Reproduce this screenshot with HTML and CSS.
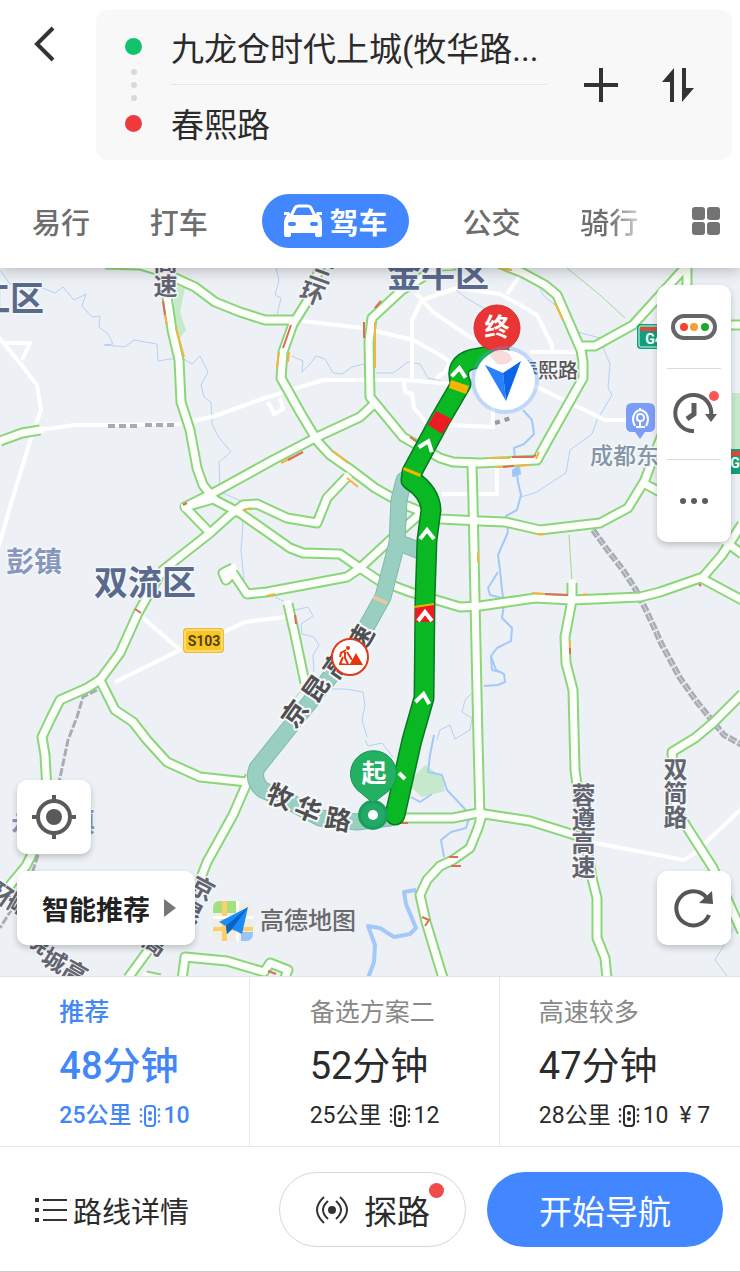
FILE: index.html
```html
<!DOCTYPE html>
<html lang="zh-CN">
    <head>
        <meta charset="UTF-8">
        <meta name="viewport" content="width=device-width, initial-scale=1.0">
        <title>路线规划</title>
        <link rel="stylesheet" href="styles.css">
    </head>
    <body>
        <header class="top">
            <div class="search-row">
                <button class="icon-btn back" aria-label="返回">
                    <svg width="24" height="40" viewBox="0 0 24 40"><path d="M20 4L4 20L20 36" fill="none" stroke="#333" stroke-width="4"/></svg>
                </button>
                <div class="search-card">
                    <div class="track">
                        <i class="stop green"></i>
                        <i class="dot"></i><i class="dot"></i><i class="dot"></i>
                        <i class="stop red"></i>
                    </div>
                    <div class="fields">
                        <input type="text" aria-label="起点" value="九龙仓时代上城(牧华路...">
                        <input type="text" aria-label="终点" value="春熙路">
                    </div>
                    <button class="icon-btn" aria-label="添加途经点">
                        <svg width="34" height="34" viewBox="0 0 34 34"><path d="M17 0V34M0 17H34" stroke="#333" stroke-width="4"/></svg>
                    </button>
                    <button class="icon-btn" aria-label="交换起终点">
                        <svg width="34" height="34" viewBox="0 0 34 34" fill="#333"><path d="M13 0V34H9V14H1z"/><path d="M21 0H25V20H33L21 34z"/></svg>
                    </button>
                </div>
            </div>
            <nav class="modes">
                <button>易行</button>
                <button>打车</button>
                <button class="active">
                    <svg width="40" height="34" viewBox="0 0 40 34">
                        <path d="M8 12L12 4Q13 2 16 2H24Q27 2 28 4L32 12" fill="none" stroke="#fff" stroke-width="3"/>
                        <path fill="#fff" d="M1 8H6Q7 11 10 11H30Q33 11 34 8H39V11H36Q39 14 39 18V31Q39 33 37 33H34Q32 33 32 31V29H8V31Q8 33 6 33H3Q1 33 1 31V18Q1 14 4 11H1z"/>
                        <rect x="5" y="18" width="8" height="4" rx="2" fill="#4287ff"/>
                        <rect x="27" y="18" width="8" height="4" rx="2" fill="#4287ff"/>
                    </svg>
                    驾车
                </button>
                <button>公交</button>
                <button class="faded">骑行</button>
                <button aria-label="更多出行方式">
                    <svg width="28" height="28" viewBox="0 0 28 28" fill="#737373"><rect width="13" height="13" rx="3"/><rect x="15" width="13" height="13" rx="3"/><rect y="15" width="13" height="13" rx="3"/><rect x="15" y="15" width="13" height="13" rx="3"/></svg>
                </button>
            </nav>
        </header>

        <main class="map">
            <svg class="map-canvas" viewBox="0 268 740 708" preserveAspectRatio="xMidYMid slice">
                <defs>
                    <g id="roads">
                        <path d="M40 430L22 433L0 441"/>
                        <path d="M105 264L140 265L160 271L195 287L215 302L240 312L265 320H293"/>
                        <path d="M322 262L308 300L293 324L283 352L281 378L300 412L318 442L330 455L350 469L375 488L405 505L440 519L480 521L505 522L540 530L600 523L628 508L645 480L656 450L668 420"/>
                        <path d="M496 262L440 266L402 290L372 318L369 342L370 397L403 437L440 458L453 462L480 463L537 460L548 440L583 378V362L581 350L557 295L545 285L523 273L496 262"/>
                        <path d="M372 406L360 417L317 437L273 460L215 492L185 507L210 533"/>
                        <path d="M166 290L172 330L179 360L181 402L190 430L197 468L203 485L215 500L240 513L290 548L303 553L340 554L360 568L378 580L410 592L460 607L480 606L535 598L572 600L640 597L660 592L703 577L722 555L742 524"/>
                        <path d="M347 477L327 498L317 523L287 518L257 504L243 505L230 515L210 533L163 570L147 597L138 613L120 653L100 680L87 688L60 700L50 720L42 737L45 755L47 790L38 842L26 866L6 890"/>
                        <path d="M185 507L213 499"/>
                        <path d="M233 568L223 573L226 580L233 573L247 594L267 592L347 577L360 568L387 543L420 514"/>
                        <path d="M288 604L295 635L305 683"/>
                        <path d="M472 466L473 500L475 600L478 740L480 818"/>
                        <path d="M395 818H453L478 813L530 821L578 836"/>
                        <path d="M482 815L478 828L470 848L453 860L440 866L427 880L420 895L426 922L443 978"/>
                        <path d="M100 680L115 710L133 722L147 740L167 762L200 777L247 782"/>
                        <path d="M250 776L233 815L207 862L200 880L170 925L147 952L128 978"/>
                        <path d="M182 980L185 957L227 961L264 972L270 963L288 970L284 980M146 976L160 979"/>
                        <path d="M572 583V600L565 637L566 663L573 690L575 770L579 800L592 878L597 898V938L605 958L607 978"/>
                        <path d="M742 694L713 723L695 738L672 752L676 810L713 868L742 932"/>
                        <path d="M703 579L742 600M726 542L742 554M647 485L660 492"/>
                        <path d="M583 346L595 346L633 325L690 262M687 262V290M730 325H742"/>
                    </g>
                    <g id="chev"><path d="M-7 5L0 -4L7 5" fill="none" stroke="#fff" stroke-width="4"/></g>
                </defs>

                <rect x="-600" y="0" width="2000" height="1400" fill="#edf1f5"/>

                <!-- parks -->
                <g fill="#c5e9ca">
                    <path d="M174 285L185 288L180 312L186 330L180 338L174 315z"/>
                    <path d="M413 778L425 765L442 777L445 791L422 797L412 788z"/>
                    <path d="M732 393H742V450H732z"/>
                </g>

                <!-- water -->
                <g class="river">
                    <path d="M0 270L10 284L20 282L30 290L40 287L55 293L63 287L74 300L86 294L82 306L92 317L100 316L99 327L108 334L113 344L104 345L125 347L134 340L157 344L158 361L170 359L182 358L192 364L200 356L208 372L201 385L204 397L211 402L212 424L218 436L231 452L219 462L220 492L232 497L245 503"/>
                    <path d="M276 268L279 280L275 295L281 298L277 315"/>
                    <path d="M292 356L303 361L302 372L310 364L316 356L325 359L333 373L342 374L352 367L364 364M376 373H393L408 362L420 364L428 378L441 381L452 388"/>
                    <path d="M456 290L466 298L480 306L503 318"/>
                    <path d="M536 279L543 295L556 306L570 330L600 338L604 350L610 364L608 388L612 395L597 420L592 434L570 450L566 473L555 480L537 492L521 497"/>
                    <path d="M240 510L243 525L241 550L244 580M275 597L287 603L295 610L308 607L313 616L301 624L302 634L314 637L319 645L313 655L314 672M330 689H345L363 692L365 705L362 720L367 737M365 740L368 746L382 743L393 757"/>
                    <path d="M480 685L465 700L462 712L472 718L470 730L455 739L450 725L440 730L437 740"/>
                    <path d="M742 910L730 935L715 960L727 976"/>
                </g>
                <g class="river wide">
                    <path d="M523 410L532 420L534 434L524 444L514 448L515 460L518 482L521 495L517 510L506 516L508 532L498 555L500 570L502 590L504 604L502 618L512 628L511 641L497 648L491 656L496 670L504 674L505 682L498 685L484 686M498 572L488 588L490 595L502 598M491 656L492 670L500 672"/>
                    <path d="M434 735L430 755L428 772L442 775L447 790L463 807L470 815L466 828L451 832L441 840L444 857M411 797L420 802L432 794"/>
                    <path class="lake" d="M416 890L404 892L406 904L416 928L410 934L394 937L380 928L368 926L375 945L374 962L368 978"/>
                    <path d="M513 470L519 466L520 474L513 476z" fill="#9cc3f5"/>
                </g>

                <!-- minor roads -->
                <g class="minor">
                    <path d="M-4 334L20 363L37 385L41 410L32 435L12 500L-4 556M5 343H30L22 360"/>
                    <path d="M40 430L75 425L108 425L180 424L215 416L262 399L323 380L403 380L430 382L452 384M268 402L274 414L283 409L280 398"/>
                    <path d="M302 321L363 328L413 340L440 355L450 362L445 372L436 378"/>
                    <path d="M412 378V320L422 300L457 288L500 294L520 305L537 315L552 345V353M520 275L507 294M416 293L433 312L470 337L486 344M404 382L405 392L412 394L414 408L428 424L493 427V405M442 494H497V468M470 468V520"/>
                    <path d="M530 352H578M535 386L605 420H630"/>
                    <path d="M142 617L180 650L115 682M224 632L245 622L285 617"/>
                    <path d="M590 842L684 860L696 852L742 808"/>
                </g>

                <!-- railways -->
                <g class="rail">
                    <path d="M593 530L606 548L623 570L636 590L647 612L662 645L680 678L697 702L710 718L724 735L742 745"/>
                    <path class="thin" d="M97 690L83 697L77 717L68 740L60 778L37 858L30 880L0 928"/>
                </g>
                <path class="rail-gap" d="M593 530L606 548L623 570L636 590L647 612L662 645L680 678L697 702L710 718L724 735L742 745"/>
                <path d="M108 426H140M145 425H176" stroke="#a9abb0" stroke-width="4" stroke-dasharray="7 4"/>
                <path d="M495 423L511 418" stroke="#999" stroke-width="4" stroke-dasharray="5 5"/>
                <path d="M567 268L600 295L625 318" class="hairline"/>
                <path d="M569 535L572 583M305 686L290 704" class="hairline"/>

                <use href="#roads" class="casing"/>
                <use href="#roads" class="surface"/>

                <!-- slow traffic -->
                <g class="slow">
                    <path d="M165 315L167 325M176 328L184 357M279 352L277 368M289 352L288 362M375 322V368M333 451L348 463M347 478L358 487M281 463L291 458M244 510L251 508M266 596L275 594M478 552V562M488 458H510M495 467H502M515 466L530 465M536 459L539 452M555 303L563 320M532 593L545 594M582 595L587 594M570 641V648M500 268L512 270M536 534L544 534"/>
                </g>
                <g class="jam">
                    <path d="M163 301L165 315M375 308L381 301M364 322V338M291 325L283 348M288 460L303 452M410 437L417 442M183 505L187 503M512 457H533L536 455M503 467L514 466M545 594L568 595M570 648V654M295 615L296 624M400 823H408M449 857H458M451 866H461M422 917L429 920L425 926M699 584L701 586M135 609L141 613M268 971L276 974"/>
                </g>

                <!-- alternative route -->
                <path d="M404 480L399 500L397 543L405 545L420 551L405 545L397 543L383 597L363 633L330 677L281 738L257 768Q252 781 263 790L290 802L320 818L357 822L390 818" class="alt-edge"/>
                <path d="M404 480L399 500L397 543L405 545L420 551L405 545L397 543L383 597L363 633L330 677L281 738L257 768Q252 781 263 790L290 802L320 818L357 822L390 818" class="alt"/>
                <path d="M373 597L387 603" stroke="#e8c8a0" stroke-width="4"/>

                <!-- chosen route -->
                <path d="M395 815L412 740L424 698L425 600L427 540L431 510Q430 492 411 480L412 472L440 420L461 384Q453 364 473 359L500 354" class="route-edge"/>
                <path d="M395 815L412 740L424 698L425 600L427 540L431 510Q430 492 411 480L412 472L440 420L461 384Q453 364 473 359L500 354" class="route"/>
                <path d="M436 411L452 419L442 434L428 425z" fill="#ed1c24"/>
                <path d="M451 380L469 386L466 394L449 388z" fill="#f7b500"/>
                <path d="M404 467L421 474L420 477L403 470z" fill="#f7b500"/>
                <path d="M415 606L434 605V622H415z" fill="#ed1c24"/>
                <path d="M414 607L434 604" stroke="#e8b400" stroke-width="2"/>
                <use href="#chev" transform="translate(459 372) rotate(5)"/>
                <use href="#chev" transform="translate(427 445) rotate(20)"/>
                <use href="#chev" transform="translate(427 534)"/>
                <use href="#chev" transform="translate(425 616)"/>
                <use href="#chev" transform="translate(423 698) rotate(8)"/>
                <path d="M399 773L405 779" stroke="#fff" stroke-width="4"/>

                <!-- district and road names -->
                <g class="label district">
                    <text x="-24" y="311">江区</text>
                    <text x="387" y="287">金牛区</text>
                    <text x="94" y="595">双流区</text>
                </g>
                <g class="label town">
                    <text x="6" y="572">彭镇</text>
                    <text x="11" y="832">永安镇</text>
                </g>
                <text class="label station" x="590" y="464">成都东</text>
                <text class="label poi" x="518" y="378">春熙路</text>
                <g class="label road upright">
                    <text x="163" y="250">高速</text>
                    <text x="581" y="783">蓉遵高速</text>
                    <text x="673" y="757">双简路</text>
                </g>
                <g class="label road">
                    <text transform="translate(322 273) rotate(20)" y="8">三</text>
                    <text transform="translate(312 294) rotate(20)" y="8">环</text>
                    <text transform="translate(202 889) rotate(28)" y="8">京</text>
                    <text transform="translate(190 912) rotate(28)" y="8">昆</text>
                    <text transform="translate(155 944) rotate(35)" y="8">高</text>
                    <text transform="translate(3 896) rotate(35)" y="8">环</text>
                    <text transform="translate(20 905) rotate(-60)" y="8">高</text>
                    <text transform="translate(38 942) rotate(35)" y="8">绕</text>
                    <text transform="translate(54 961) rotate(30)" y="8">城</text>
                    <text transform="translate(75 973) rotate(30)" y="8">高</text>
                </g>
                <g class="label road dark">
                    <text transform="translate(295 714) rotate(-55)" y="9">京</text>
                    <text transform="translate(316 689) rotate(-55)" y="9">昆</text>
                    <text transform="translate(337 665) rotate(-55)" y="9">高</text>
                    <text transform="translate(361 639) rotate(-60)" y="9">速</text>
                    <text transform="translate(280 797) rotate(22)" y="9">牧</text>
                    <text transform="translate(308 810) rotate(22)" y="9">华</text>
                    <text transform="translate(338 820) rotate(10)" y="9">路</text>
                </g>

                <!-- road shields -->
                <rect x="183" y="628" width="41" height="25" rx="4" fill="#eebb2c"/>
                <rect x="185" y="630" width="37" height="21" rx="2" fill="#f9c623" stroke="#fff3c0"/>
                <text class="shield" x="204" y="646">S103</text>
                <rect x="637" y="324" width="40" height="25" rx="4" fill="#12a07c"/>
                <rect x="639" y="326" width="36" height="21" rx="2" fill="#12a07c" stroke="#d8f5ec"/>
                <path d="M640 327H675V331H640z" fill="#dc4a3e"/>
                <text class="shield light" x="658" y="344">G42</text>
                <rect x="726" y="449" width="40" height="25" rx="4" fill="#12a07c"/>
                <path d="M728 451H764V456H728z" fill="#dc4a3e"/>
                <text class="shield light" x="743" y="468">G76</text>

                <!-- railway station pin -->
                <path d="M632 403H649Q655 403 655 409V426Q655 432 649 432H645L640 439L635 432H632Q626 432 626 426V409Q626 403 632 403z" fill="#7c9df6"/>
                <path d="M635 426Q631 419 635 413Q640 407 646 413Q650 419 646 426M637 418Q637 414 640 414Q644 414 644 418Q644 421 640 421Q637 421 637 418M640 421V426M636 427H645M640 408V411" fill="none" stroke="#fff" stroke-width="2"/>

                <!-- road works -->
                <circle cx="350" cy="657" r="18" fill="#fff" stroke="#e03a1e" stroke-width="2"/>
                <path d="M350 664L356 653L363 665H339V663z" fill="#e8340c"/>
                <circle cx="348" cy="648" r="2" fill="#e8340c"/>
                <path d="M346 650L341 653L340 657M345 652V658L348 664M343 657L340 664M347 652L352 660" fill="none" stroke="#e8340c" stroke-width="2"/>

                <!-- end, start and heading markers -->
                <circle cx="497" cy="328" r="23" fill="#ea3535" stroke="#d42f2f"/>
                <text class="pin" x="497" y="336">终</text>
                <circle cx="505" cy="380" r="34" fill="#5aa0ff" opacity=".3"/>
                <circle cx="505" cy="380" r="30" fill="#fff"/>
                <path d="M490 356Q491 351 500 350Q511 352 512 360Q507 366 497 364z" fill="#f7dcdc"/>
                <path d="M485 365L503 373L506 401z" fill="#2a80ff"/>
                <path d="M521 361L503 373L506 401z" fill="#0d63ea"/>
                <circle cx="373" cy="815" r="15" fill="#18a05a"/>
                <path d="M373 803L361 793A23 23 0 1 1 386 793z" fill="#23b063" stroke="#169457"/>
                <circle cx="373" cy="815" r="12" fill="#23a867"/>
                <circle cx="373" cy="815" r="5" fill="#fff"/>
                <text class="pin" x="374" y="782">起</text>
            </svg>

            <div class="card tools">
                <button aria-label="路况">
                    <svg width="46" height="26" viewBox="0 0 46 26"><rect x="2" y="2" width="42" height="22" rx="11" fill="#fff" stroke="#666" stroke-width="4"/><circle cx="13" cy="13" r="4" fill="#f0432f"/><circle cx="23" cy="13" r="4" fill="#f79e2d"/><circle cx="34" cy="13" r="4" fill="#1aa72c"/></svg>
                </button>
                <button aria-label="出发时间">
                    <svg width="50" height="46" viewBox="0 0 50 46"><path d="M25 40A18 18 0 1 1 42 25" fill="none" stroke="#5c5c5c" stroke-width="4"/><path d="M36 23H48L42 31z" fill="#5c5c5c"/><path d="M25 12V23L18 28" fill="none" stroke="#5c5c5c" stroke-width="5"/><circle cx="45" cy="5" r="5" fill="#ff5555"/></svg>
                </button>
                <button aria-label="更多">
                    <svg width="30" height="8" viewBox="0 0 30 8" fill="#5c5c5c"><circle cx="4" cy="4" r="3"/><circle cx="15" cy="4" r="3"/><circle cx="26" cy="4" r="3"/></svg>
                </button>
            </div>

            <div class="corner-left">
                <button class="card square" aria-label="定位">
                    <svg width="44" height="44" viewBox="0 0 44 44"><circle cx="22" cy="22" r="16" fill="none" stroke="#5a5a5a" stroke-width="4"/><circle cx="22" cy="22" r="8" fill="#5a5a5a"/><path d="M22 0V8M22 36V44M0 22H8M36 22H44" stroke="#5a5a5a" stroke-width="4"/></svg>
                </button>
                <div class="brand-row">
                    <button class="card prefer">
                        智能推荐
                        <svg width="12" height="18" viewBox="0 0 12 18"><path d="M0 0L12 9L0 18z" fill="#777"/></svg>
                    </button>
                    <div class="brand">
                        <svg width="40" height="40" viewBox="0 0 40 40">
                            <rect width="40" height="40" rx="7" fill="#efeee6"/>
                            <path d="M7 0H24V12H0V7Q0 0 7 0z" fill="#a4e07e"/>
                            <path d="M9 0H14V40H9zM0 26H40V30H0z" fill="#fbcf6a"/>
                            <path d="M23 0H26V40H23zM0 15H40V18H0z" fill="#fff"/>
                            <path d="M28 31H40V34Q39 40 33 40H28z" fill="#9cc4fa"/>
                            <path d="M35 6L6 21L13 25L14 33L19 28L29 33z" fill="#1c8bf7"/>
                            <path d="M35 6L13 25L14 33L19 28z" fill="#0a63c4"/>
                        </svg>
                        <span>高德地图</span>
                    </div>
                </div>
            </div>

            <button class="card square refresh" aria-label="刷新">
                <svg width="40" height="40" viewBox="0 0 40 40"><path d="M35 27A17 17 0 1 1 32 9" fill="none" stroke="#555" stroke-width="4"/><path d="M38 3L39 16L25 15z" fill="#555"/></svg>
            </button>
        </main>

        <svg width="0" height="0" class="sprite">
            <symbol id="light" viewBox="0 0 24 24"><rect x="7" y="2" width="10" height="20" rx="3" fill="none" stroke="currentColor" stroke-width="2"/><circle cx="12" cy="9" r="2" fill="currentColor"/><circle cx="12" cy="15" r="2" fill="currentColor"/><path d="M2 5L4 6M2 11L4 12M2 17L4 18M22 5L20 6M22 11L20 12M22 17L20 18" stroke="currentColor" stroke-width="2"/></symbol>
        </svg>

        <section class="plans">
            <button class="plan selected">
                <span class="plan-body">
                    <span class="name">推荐</span>
                    <span class="time">48分钟</span>
                    <span class="info">25公里<svg width="24" height="24"><use href="#light"/></svg>10</span>
                </span>
            </button>
            <button class="plan">
                <span class="plan-body">
                    <span class="name">备选方案二</span>
                    <span class="time">52分钟</span>
                    <span class="info">25公里<svg width="24" height="24"><use href="#light"/></svg>12</span>
                </span>
            </button>
            <button class="plan">
                <span class="plan-body">
                    <span class="name">高速较多</span>
                    <span class="time">47分钟</span>
                    <span class="info">28公里<svg width="24" height="24"><use href="#light"/></svg>10<span class="toll">¥ 7</span></span>
                </span>
            </button>
        </section>

        <footer class="actions">
            <button class="detail">
                <svg width="32" height="28" viewBox="0 0 32 28"><path d="M0 4H4M0 14H4M0 24H4" stroke="#333" stroke-width="4"/><path d="M8 4H32M8 14H32M8 24H32" stroke="#333" stroke-width="2"/></svg>
                路线详情
            </button>
            <button class="scout">
                <svg width="34" height="32" viewBox="0 0 34 32" fill="none" stroke="#333" stroke-width="2"><circle cx="17" cy="16" r="3" fill="#333"/><path d="M9 3Q-5 16 9 29M25 3Q39 16 25 29M13 7Q3 16 13 25M21 7Q31 16 21 25"/></svg>
                探路
                <i class="badge"></i>
            </button>
            <button class="go">开始导航</button>
        </footer>
    </body>
</html>
```
FILE: styles.css
```css
*{
    margin: 0;
    padding: 0;
    box-sizing: border-box;
}

body{
    min-height: 100vh;
    display: flex;
    flex-direction: column;
    background: #fff;
    color: #2b2b2b;
    font-family: Roboto, "Noto Sans CJK SC", sans-serif;
}

button{
    border: 0;
    background: none;
    color: inherit;
    font: inherit;
    cursor: pointer;
}

svg{
    display: block;
    flex: none;
}

.top{
    position: relative;
    z-index: 2;
    background: #fff;
    box-shadow: 0 2px 14px rgba(0, 0, 0, 0.25);
}

.search-row{
    display: flex;
    align-items: flex-start;
    padding: 10px 8px 0 33px;
}

.back{
    width: 63px;
    padding-top: 14px;
}

.search-card{
    flex: 1;
    display: flex;
    align-items: center;
    gap: 43px;
    min-width: 0;
    height: 150px;
    padding: 0 37px 0 29px;
    border-radius: 12px;
    background: #f8f8f8;
}

.track{
    display: flex;
    flex-direction: column;
    align-items: center;
    gap: 7px;
    width: 17px;
}

.stop{
    width: 17px;
    height: 17px;
    border-radius: 50%;
}

.stop.green{
    margin-bottom: 7px;
    background: #12c36d;
}

.stop.red{
    margin-top: 7px;
    background: #ed3a3a;
}

.dot{
    width: 6px;
    height: 6px;
    border-radius: 50%;
    background: #d9d9d9;
}

.fields{
    flex: 1;
    min-width: 0;
    margin: 0 -6px 0 -14px;
}

.fields input{
    display: block;
    width: 100%;
    height: 75px;
    border: 0;
    outline: 0;
    background: none;
    color: #2b2b2b;
    font: inherit;
    font-size: 33px;
    text-overflow: ellipsis;
}

.fields input:first-child{
    border-bottom: 1px solid #e6e6e6;
}

.modes{
    display: flex;
    align-items: center;
    justify-content: space-between;
    padding: 34px 20px 20px 32px;
    color: #6e6e6e;
    font-size: 29px;
    font-weight: 500;
}

.modes button{
    height: 54px;
}

.modes .active{
    display: flex;
    align-items: center;
    gap: 7px;
    margin: 0 -6px;
    padding: 0 21px;
    border-radius: 27px;
    background: #4287ff;
    color: #fff;
    font-weight: 700;
}

.modes .faded{
    margin-right: -6px;
    background: linear-gradient(90deg, #6e6e6e 50%, #d0d0d0);
    background-clip: text;
    color: transparent;
}

.map{
    position: relative;
    flex: 1;
    min-height: 700px;
    overflow: hidden;
}

.map-canvas{
    position: absolute;
    inset: 0;
    width: 100%;
    height: 100%;
}

.casing, .surface, .minor, .river, .rail, .rail-gap, .slow, .jam, .hairline{
    fill: none;
    stroke-linejoin: round;
}

.casing{
    stroke: #8bd67a;
    stroke-width: 11px;
}

.surface{
    stroke: #fdfffb;
    stroke-width: 7px;
    stroke-linecap: square;
}

.minor{
    stroke: #fff;
    stroke-width: 4px;
}

.river{
    stroke: #b5d0f5;
    stroke-width: 1px;
}

.river.wide{
    stroke: #a3c8fa;
    stroke-width: 2px;
}

.river .lake{
    stroke-width: 4px;
}

.rail path{
    stroke: #a9acb5;
    stroke-width: 6px;
    stroke-dasharray: 8px 2px;
}

.rail .thin{
    stroke-width: 3px;
}

.rail-gap{
    stroke: #d9dce3;
    stroke-width: 1px;
}

.hairline{
    stroke: #a5d590;
    stroke-width: 1px;
}

.slow{
    stroke: #f3b53f;
    stroke-width: 2px;
}

.jam{
    stroke: #e06a55;
    stroke-width: 2px;
}

.alt-edge, .alt, .route-edge, .route{
    fill: none;
    stroke-linecap: round;
    stroke-linejoin: round;
}

.alt-edge{
    stroke: #83b9ac;
    stroke-width: 17px;
}

.alt{
    stroke: #98cfc1;
    stroke-width: 15px;
}

.route-edge{
    stroke: #067a22;
    stroke-width: 21px;
}

.route{
    stroke: #09b822;
    stroke-width: 18px;
}

.label{
    font-weight: 500;
    stroke: #f5f7fa;
    stroke-width: 3px;
    stroke-linejoin: round;
    paint-order: stroke;
}

.district{
    fill: #5a6a8c;
    font-size: 34px;
    font-weight: 700;
}

.town{
    fill: #8697bb;
    font-size: 28px;
    font-weight: 700;
}

.station{
    fill: #8496a8;
    font-size: 23px;
}

.poi{
    fill: #555;
    font-size: 20px;
}

.road{
    fill: #62656f;
    font-size: 24px;
    font-weight: 700;
    text-anchor: middle;
}

.road.upright{
    text-anchor: start;
    writing-mode: vertical-rl;
}

.road.dark{
    fill: #505050;
    font-size: 26px;
    stroke-width: 4px;
}

.shield{
    fill: #55410c;
    font-size: 14px;
    font-weight: 700;
    text-anchor: middle;
}

.shield.light{
    fill: #fff;
}

.pin{
    fill: #fff;
    font-size: 25px;
    font-weight: 700;
    text-anchor: middle;
}

.card{
    border-radius: 10px;
    background: #fff;
    box-shadow: 0 3px 6px rgba(0, 0, 0, 0.2);
}

.tools{
    position: absolute;
    top: 17px;
    right: 9px;
    width: 74px;
    padding: 0 10px;
}

.tools button{
    display: flex;
    align-items: center;
    justify-content: center;
    width: 100%;
    height: 83px;
}

.tools button + button{
    height: 91px;
    border-top: 1px solid #dcdcdc;
}

.tools button:last-child{
    height: 83px;
}

.square{
    display: flex;
    align-items: center;
    justify-content: center;
    width: 74px;
    height: 74px;
}

.corner-left{
    position: absolute;
    bottom: 31px;
    left: 17px;
    display: flex;
    flex-direction: column;
    gap: 17px;
}

.brand-row{
    display: flex;
    align-items: center;
    gap: 18px;
}

.prefer{
    display: flex;
    align-items: center;
    gap: 14px;
    width: 178px;
    height: 74px;
    padding-left: 25px;
    color: #222;
    font-size: 27px;
    font-weight: 700;
    white-space: nowrap;
}

.brand{
    display: flex;
    align-items: center;
    gap: 7px;
    padding-top: 26px;
    color: #6a6a6a;
    font-size: 24px;
    font-weight: 500;
    line-height: 24px;
}

.refresh{
    position: absolute;
    right: 9px;
    bottom: 31px;
}

.sprite{
    position: absolute;
}

.plans{
    position: relative;
    display: flex;
    overflow: hidden;
    border-top: 1px solid #e2e4e8;
    border-bottom: 1px solid #e8e8e8;
    background: #fff;
}

.plan{
    flex: 1 0 250px;
    display: flex;
    justify-content: center;
    padding: 17px 0 15px;
    border-right: 1px solid #e8e8e8;
}

.plan-body{
    display: flex;
    flex-direction: column;
    text-align: left;
    white-space: nowrap;
}

.name{
    color: #888;
    font-size: 25px;
    line-height: 38px;
}

.time{
    font-size: 38px;
    line-height: 68px;
}

.info{
    display: flex;
    align-items: center;
    gap: 2px;
    font-size: 23px;
    line-height: 31px;
}

.info svg{
    margin-left: 4px;
}

.toll{
    margin-left: 9px;
}

.selected, .selected .name{
    color: #4287f5;
    font-weight: 500;
}

.actions{
    display: flex;
    align-items: center;
    gap: 21px;
    padding: 25px 17px 24px 35px;
    border-bottom: 1px solid #ccc;
    background: #fff;
}

.actions button{
    display: flex;
    align-items: center;
    justify-content: center;
    height: 75px;
    white-space: nowrap;
}

.actions .detail{
    flex: 1;
    justify-content: flex-start;
    gap: 6px;
    font-size: 29px;
}

.actions .scout{
    position: relative;
    gap: 15px;
    width: 187px;
    border: 1px solid #d6d6d6;
    border-radius: 38px;
    font-size: 33px;
}

.badge{
    position: absolute;
    top: 10px;
    right: 21px;
    width: 15px;
    height: 15px;
    border-radius: 50%;
    background: #f04a4a;
}

.actions .go{
    width: 236px;
    border-radius: 38px;
    background: #4287ff;
    color: #fff;
    font-size: 33px;
}
```
